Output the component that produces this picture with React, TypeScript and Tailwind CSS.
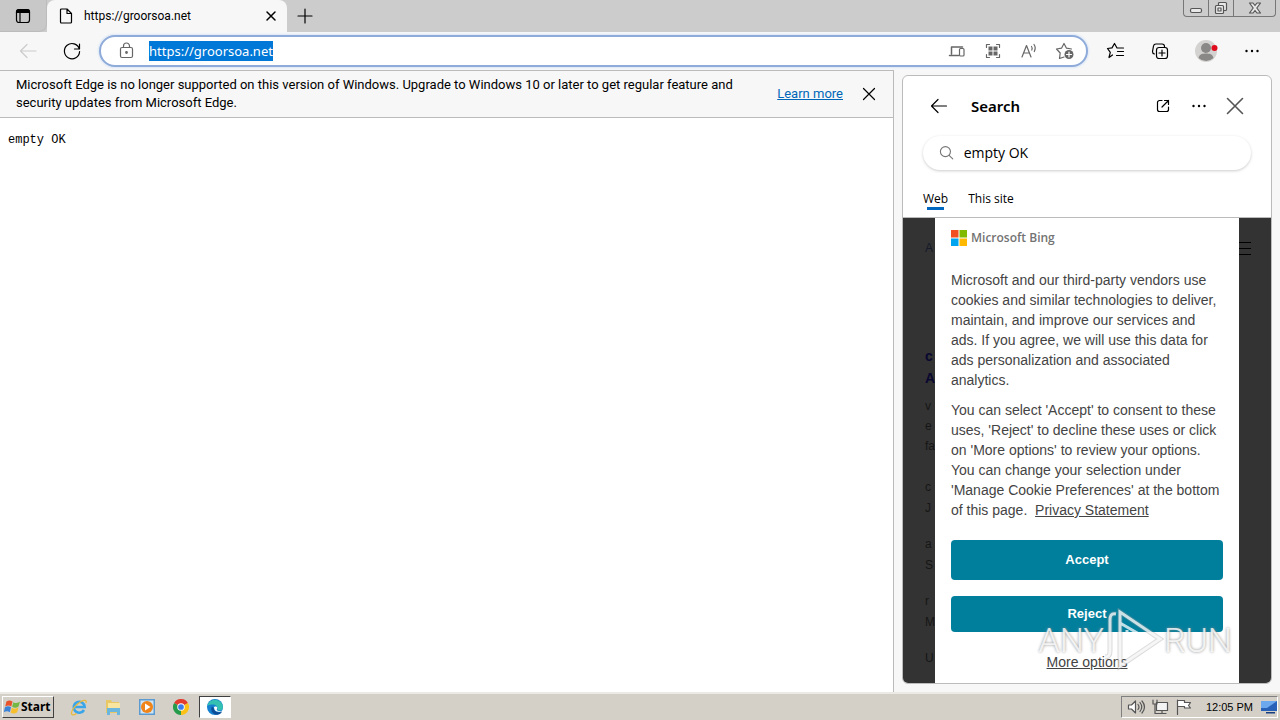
import { useState } from 'react'
import type { ReactNode } from 'react'

type SvgProps = {
    children: ReactNode
    className?: string
    box?: string
}

const results = [
    ['c', 'J'],
    ['a', 'S'],
    ['r', 'M'],
    ['U'],
]

function Icon({ children, className = 'size-5', box = '0 0 20 20' }: SvgProps) {
    return (
        <svg
            viewBox={box}
            className={className}
            fill="none"
            stroke="currentColor"
            strokeWidth="1.2"
            strokeLinecap="round"
            strokeLinejoin="round"
            aria-hidden="true"
        >
            {children}
        </svg>
    )
}

function Dots() {
    return (
        <Icon className="size-4" box="0 0 16 16">
            <g fill="currentColor" stroke="none">
                <circle cx="2.5" cy="8" r="1.2" />
                <circle cx="8" cy="8" r="1.2" />
                <circle cx="13.5" cy="8" r="1.2" />
            </g>
        </Icon>
    )
}

function TabStrip() {
    return (
        <header className="flex h-8 shrink-0 items-end bg-[#cccccc]">
            <button aria-label="Tab actions" className="flex h-8 w-[47px] items-center justify-center rounded-br-lg border-r border-b border-[#bcbcbc] bg-[#c8c8c8]">
                <Icon className="size-4" box="0 0 16 16">
                    <rect x="1.5" y="1.5" width="13" height="13" rx="2.5" />
                    <path d="M1.5 4.5V4a2.500 2.500 0 0 1 2.500-2.500h8A2.500 2.500 0 0 1 14.500 4v.5z" fill="currentColor" />
                    <path d="M5 5v9.500" />
                </Icon>
            </button>
            <div className="flex h-8 w-60 items-center rounded-t-lg bg-[#f7f7f7] pr-2 pl-[11px]">
                <Icon className="size-4" box="0 0 16 16">
                    <path d="M2.500 2a1 1 0 0 1 1-1H9l4.500 4.500V14a1 1 0 0 1-1 1h-9a1 1 0 0 1-1-1zM9 1v4.500h4.500" />
                </Icon>
                <span className="ml-[10px] flex-1 text-xs [font-family:Roboto,sans-serif]">https://groorsoa.net</span>
                <button aria-label="Close tab" className="flex size-4 items-center justify-center">
                    <Icon className="size-3" box="0 0 12 12">
                        <path d="M2 2l8 8M10 2l-8 8" strokeWidth="1.500" />
                    </Icon>
                </button>
            </div>
            <button aria-label="New tab" className="flex h-8 w-[35px] items-center justify-center">
                <Icon className="size-4" box="0 0 16 16">
                    <path d="M8 1v14M1 8h14" />
                </Icon>
            </button>
            <div className="mr-1 ml-auto flex h-[17px] self-start rounded-b border border-t-0 border-[#777777] text-[#555555]">
                <button aria-label="Minimize" className="flex w-[25px] items-center justify-center border-r border-[#777777]">
                    <Icon className="h-4 w-4" box="0 0 16 16">
                        <rect x="2.500" y="8.500" width="11" height="4" rx="1.500" fill="#e8e8e8" />
                    </Icon>
                </button>
                <button aria-label="Restore" className="flex w-[25px] items-center justify-center border-r border-[#777777]">
                    <Icon className="h-4 w-4" box="0 0 16 16">
                        <rect x="5.500" y="2.500" width="8" height="8" rx="1" fill="#e8e8e8" />
                        <rect x="2.500" y="5.500" width="8" height="8" rx="1" fill="#e8e8e8" />
                        <rect x="5" y="8" width="3" height="3" />
                    </Icon>
                </button>
                <button aria-label="Close window" className="flex w-[41px] items-center justify-center">
                    <Icon className="h-4 w-4" box="0 0 16 16">
                        <path d="M2.500 3h3.500l2 2.500L10 3h3.500l-3.700 5 3.700 5H10l-2-2.500L6 13H2.500l3.700-5z" fill="#e8e8e8" />
                    </Icon>
                </button>
            </div>
        </header>
    )
}

function Toolbar() {
    return (
        <nav className="flex h-[38px] shrink-0 items-center bg-[#f7f7f7] pr-5 pl-[18px]">
            <button aria-label="Back" disabled className="text-[#cccccc]">
                <Icon>
                    <path d="M18 10H2.500M9 3.500L2.500 10 9 16.500" />
                </Icon>
            </button>
            <button aria-label="Refresh" className="ml-6">
                <Icon>
                    <path d="M17.300 8A7.600 7.600 0 1 0 17.600 10.500M17.500 3v5h-5" />
                </Icon>
            </button>
            <div className="ml-[17px] flex h-8 flex-1 items-center rounded-full border-2 border-[#8fabd9] bg-white pr-[11px] pl-4 text-[#666666] shadow-[0_0_2px_1px_#dbe7f7]">
                <Icon>
                    <rect x="3.500" y="6.500" width="12" height="10" rx="1.500" />
                    <path d="M6.500 6.500V5a3 3 0 0 1 6 0v1.500" />
                    <circle cx="9.500" cy="11.500" r=".8" fill="currentColor" />
                </Icon>
                <div className="ml-3 flex-1 text-[13px] leading-5">
                    <button className="bg-[#0078d7] text-white">https://groorsoa.net</button>
                </div>
                <div className="flex items-center gap-4">
                    <button aria-label="Send to devices">
                        <Icon>
                            <path d="M4.500 13V6h11M2.500 14.500h9" strokeWidth="1.500" />
                            <rect x="12.500" y="7.500" width="4.500" height="7.500" rx="1" />
                        </Icon>
                    </button>
                    <button aria-label="QR code">
                        <Icon>
                            <path d="M3.500 6.500v-3h3M13.500 3.500h3v3M16.500 13.500v3h-3M6.500 16.500h-3v-3" />
                            <g fill="currentColor" stroke="none">
                                <rect x="5.500" y="5.500" width="4" height="4" />
                                <rect x="10.500" y="5.500" width="4" height="4" />
                                <rect x="5.500" y="10.500" width="4" height="4" />
                                <rect x="10.500" y="10.500" width="4" height="4" />
                            </g>
                        </Icon>
                    </button>
                    <button aria-label="Read aloud">
                        <Icon>
                            <path d="M3 16L7.500 4.500 12 16M4.600 12h5.800M12.500 5.500c.8 1 .8 2.500.3 3.500M15 3.500c1.500 2 1.500 4.500.3 7" />
                        </Icon>
                    </button>
                    <button aria-label="Add to favorites">
                        <Icon>
                            <path d="M9 16l-4.500 1.500.7-5.500L1.500 8l5-.8L9 2.500l2.500 4.700 5 .8" />
                            <circle cx="14" cy="13.500" r="4.500" fill="#666666" stroke="none" />
                            <path d="M14 11v5M11.500 13.500h5" stroke="#ffffff" />
                        </Icon>
                    </button>
                </div>
            </div>
            <button aria-label="Favorites" className="ml-[18px]">
                <Icon>
                    <path d="M6.500 14l-3.500 2.500 1.300-5.200L1.500 7.500l4.500-.6L8.500 2.500 11 7h6.500M11.500 10.500h6M10.500 14.500h7" />
                </Icon>
            </button>
            <button aria-label="Collections" className="ml-6">
                <Icon>
                    <path d="M4.500 13a2.500 2.500 0 0 1-2-2.500L3.500 5A2.500 2.500 0 0 1 6 3h6a2.500 2.500 0 0 1 2.500 2.500" />
                    <rect x="6.500" y="6.500" width="11" height="11" rx="2.500" fill="#f7f7f7" />
                    <path d="M12 9v6M9 12h6" />
                </Icon>
            </button>
            <button aria-label="Profile" className="ml-6">
                <Icon className="size-6" box="0 0 24 24">
                    <g stroke="none">
                        <circle cx="12" cy="12" r="11" fill="#d4d2d0" />
                        <circle cx="12" cy="9" r="5" fill="#8a8886" />
                        <path d="M4.500 19c1-4 4-4.500 7.500-4.500s6.500.5 7.500 4.500a11 11 0 0 1-15 0z" fill="#8a8886" />
                        <circle cx="20.500" cy="9" r="3" fill="#e00b1c" />
                    </g>
                </Icon>
            </button>
            <button aria-label="Settings and more" className="ml-[26px]"><Dots /></button>
        </nav>
    )
}

function Notice({ onClose }: { onClose: () => void }) {
    return (
        <div className="flex items-center border-b border-[#bbbbbb] bg-[#f7f7f7] py-[5px] pr-4 pl-4 text-[13px] leading-[18px] [font-family:Roboto,sans-serif]">
            <p className="flex-1">
                Microsoft Edge is no longer supported on this version of Windows. Upgrade to Windows 10 or later to get regular feature and security updates from Microsoft Edge.
            </p>
            <a href="#learn" className="ml-2 text-[#0067b8] underline">Learn more</a>
            <button aria-label="Dismiss" className="ml-[18px]" onClick={onClose}>
                <Icon className="size-4" box="0 0 16 16">
                    <path d="M2.500 2.500l11 11M13.500 2.500l-11 11" />
                </Icon>
            </button>
        </div>
    )
}

function ResultsEdge() {
    return (
        <div className="w-8 shrink-0 overflow-hidden pl-[22px] text-xs leading-[21px] text-[#161616]">
            <p className="pt-5 text-[#15192b]">A</p>
            <div className="mt-[86px] text-sm leading-[22px] font-bold text-[#0a0830]">
                <p>c</p>
                <p>A</p>
            </div>
            <div className="mt-[7px] mb-[21px] leading-5">
                <p>v</p>
                <p>e</p>
                <p>fa</p>
            </div>
            {results.map((lines) => (
                <div key={lines[0]} className="mb-[15px]">
                    {lines.map((line) => (
                        <p key={line}>{line}</p>
                    ))}
                </div>
            ))}
        </div>
    )
}

function Consent() {
    return (
        <section className="min-w-0 flex-1 bg-white px-4 pt-3 text-sm leading-5 text-[#444444]">
            <div className="flex h-4 items-center gap-1">
                <svg viewBox="0 0 16 16" className="size-4" aria-hidden="true">
                    <path fill="#f25022" d="M0 0h7.500v7.500H0z" />
                    <path fill="#7fba00" d="M8.500 0H16v7.500H8.500z" />
                    <path fill="#00a4ef" d="M0 8.500h7.500V16H0z" />
                    <path fill="#ffb900" d="M8.500 8.500H16V16H8.500z" />
                </svg>
                <span className="text-xs font-semibold text-[#737373] [font-family:'Open_Sans',sans-serif]">Microsoft Bing</span>
            </div>
            <p className="mt-6">
                Microsoft and our third-party vendors use cookies and similar technologies to deliver, maintain, and improve our services and ads. If you agree, we will use this data for ads personalization and associated analytics.
            </p>
            <p className="mt-[10px]">
                You can select 'Accept' to consent to these uses, 'Reject' to decline these uses or click on 'More options' to review your options. You can change your selection under 'Manage Cookie Preferences' at the bottom of this page.&nbsp; <a href="#privacy" className="underline">Privacy Statement</a>
            </p>
            <button className="mt-5 block h-10 w-full rounded bg-[#007f9d] text-[13px] font-bold text-white">Accept</button>
            <button className="mt-4 block h-9 w-full rounded bg-[#007f9d] text-[13px] font-bold text-white">Reject</button>
            <div className="mt-5 text-center">
                <a href="#options" className="underline">More options</a>
            </div>
        </section>
    )
}

function SearchPanel() {
    const [query, setQuery] = useState('empty OK')

    return (
        <aside className="mt-[5px] mr-2 mb-2 ml-2 flex w-[370px] shrink-0 flex-col overflow-hidden rounded-md border border-[#bbbbbb] bg-white">
            <div className="flex h-[60px] shrink-0 items-center pr-[26px] pl-[26px]">
                <button aria-label="Back to sidebar">
                    <Icon>
                        <path d="M17.500 10h-15M9 3.500L2.500 10 9 16.500" />
                    </Icon>
                </button>
                <h1 className="ml-[22px] flex-1 text-[15px] font-semibold">Search</h1>
                <button aria-label="Open in new tab">
                    <Icon className="size-4" box="0 0 16 16">
                        <path d="M7 2.500H4.500a2 2 0 0 0-2 2v7a2 2 0 0 0 2 2h7a2 2 0 0 0 2-2V9M9.500 2.500h4v4M13.500 2.500L7 9" />
                    </Icon>
                </button>
                <button aria-label="More" className="ml-5"><Dots /></button>
                <button aria-label="Close" className="ml-[18px] text-[#555555]">
                    <Icon>
                        <path d="M2.500 2.500l15 15M17.500 2.500l-15 15" strokeWidth="1.600" />
                    </Icon>
                </button>
            </div>
            <label className="mx-5 flex h-[34px] shrink-0 items-center rounded-full px-4 shadow-[0_1px_3px_#cccccc]">
                <Icon className="size-4 text-[#767676]" box="0 0 16 16">
                    <circle cx="7" cy="6.500" r="5.500" />
                    <path d="M11 10.500L15 14.500" />
                </Icon>
                <input
                    aria-label="Search the web"
                    className="ml-[10px] w-full text-sm outline-none [font-family:'Open_Sans',sans-serif]"
                    value={query}
                    onChange={(e) => setQuery(e.target.value)}
                />
            </label>
            <div className="flex h-12 shrink-0 items-end gap-5 border-b border-[#bbbbbb] px-5 pb-2 text-xs leading-4 [font-family:'Open_Sans',sans-serif]">
                <button className="relative pb-0.5">
                    Web
                    <span className="absolute inset-x-1 -bottom-px h-[3px] bg-[#0067c0]" />
                </button>
                <button className="pb-0.5">This site</button>
            </div>
            <div className="flex min-h-0 flex-1 overflow-hidden bg-[#333333] [font-family:'Liberation_Sans',Arial,sans-serif]">
                <ResultsEdge />
                <Consent />
                <div className="w-8 shrink-0 pt-[22px]">
                    <Icon className="h-4 w-3 text-black" box="0 0 12 16">
                        <path d="M0 2.500h11.500M0 8.500h11.500M0 14.500h11.500" />
                    </Icon>
                </div>
            </div>
        </aside>
    )
}

function Watermark() {
    return (
        <div className="pointer-events-none absolute right-12 bottom-12 flex items-center text-[34px] leading-none font-light text-white/80 [font-family:Roboto,sans-serif] [text-shadow:0_0_3px_#888888]">
            <span>ANY</span>
            <svg viewBox="0 0 60 64" className="h-16 w-[60px]" fill="none" stroke="#ffffff" strokeOpacity=".75" strokeWidth="3" aria-hidden="true">
                <g stroke="#999999" strokeOpacity=".35" strokeWidth="5">
                    <path d="M12 6c-5-1-6 2-6 6v31c0 4-1 6-5 6M16 4v54l40-27z" />
                </g>
                <path d="M12 6c-5-1-6 2-6 6v31c0 4-1 6-5 6M16 4v54l40-27zM16 15l26 15M23 22v19" />
            </svg>
            <span>RUN</span>
        </div>
    )
}

function Taskbar() {
    return (
        <footer className="flex h-7 shrink-0 items-center border-t-2 border-[#eceae5] bg-[#d4d0c8] pr-[2px] pl-[2px]">
            <button className="flex h-[22px] w-[52px] items-center border border-t-white border-r-[#404040] border-b-[#404040] border-l-white pl-px text-xs font-bold">
                <svg viewBox="1 2 14 12" className="h-4 w-[17px] shrink-0" aria-hidden="true">
                    <path fill="#e8532b" d="M3 3.500c2-1.500 3.500-1 5 0L7 7.500c-1.500-1-3-1-5 0z" />
                    <path fill="#74b843" d="M8.700 4c2 1 3.500 1 5.500-.5L13 7.500c-2 1.400-3.500 1.300-5.300.3z" />
                    <path fill="#3c83d8" d="M1.800 8.300c2-1.300 3.500-1 5 0l-1 4c-1.500-1-3-1-5 0z" />
                    <path fill="#f7bf2b" d="M7.500 8.700c2 1 3.500 1 5.500-.4l-1.200 4c-2 1.400-3.500 1.300-5.300.4z" />
                </svg>
                <span>Start</span>
            </button>
            <div className="ml-2 flex items-center">
                <button aria-label="Internet Explorer" className="flex w-[34px] justify-center">
                    <svg viewBox="0 0 18 18" className="size-[18px]" fill="none" aria-hidden="true">
                        <path d="M14 12a5.500 5.500 0 1 1 .7-3H5" stroke="#3aa5e8" strokeWidth="2.600" />
                        <path d="M16 5c1-3-1.500-3.500-5-1.500S2 11 1.500 14.500s3 2.500 5 1" stroke="#e9b93c" strokeWidth="1.300" />
                    </svg>
                </button>
                <button aria-label="Explorer" className="flex w-[34px] justify-center">
                    <svg viewBox="0 0 18 18" className="size-[18px]" aria-hidden="true">
                        <path fill="#e8c765" d="M2 2h5l1 2h7v11H2z" />
                        <path fill="#f8e6a0" d="M4 5h12v6H4z" />
                        <path fill="#6bb6df" d="M3 10h13v7h-3v-3H6v3H3z" />
                    </svg>
                </button>
                <button aria-label="Media Player" className="flex w-[34px] justify-center">
                    <svg viewBox="0 0 18 18" className="size-[18px]" aria-hidden="true">
                        <path fill="#5c9bd0" d="M1 1h16v16H1z" />
                        <path fill="#cfe4f5" d="M2.500 2.500h13v13h-13z" />
                        <circle cx="9" cy="9" r="6" fill="#f08418" />
                        <path fill="#ffffff" d="M7 5.500v7L12.500 9z" />
                    </svg>
                </button>
                <button aria-label="Chrome" className="flex w-[34px] justify-center">
                    <svg viewBox="0 0 18 18" className="size-4" aria-hidden="true">
                        <path fill="#e33b2e" d="M9 9L1.200 4.500a9 9 0 0 1 15.600 0z" />
                        <path fill="#fbc116" d="M9 9l7.800-4.500A9 9 0 0 1 9 18z" />
                        <path fill="#269b4b" d="M9 9v9A9 9 0 0 1 1.200 4.500z" />
                        <circle cx="9" cy="9" r="4.200" fill="#ffffff" />
                        <circle cx="9" cy="9" r="3.200" fill="#3b7ded" />
                    </svg>
                </button>
                <button aria-label="Edge" className="ml-px flex h-[22px] w-8 items-center justify-center border border-t-[#404040] border-r-white border-b-white border-l-[#404040] bg-white">
                    <svg viewBox="0 0 18 18" className="size-[18px]" aria-hidden="true">
                        <circle cx="9" cy="9" r="8" fill="#1480cf" />
                        <path fill="#35c1b2" d="M1.200 8A8 8 0 0 1 17 9c0 3-2.500 4-5.500 3.200C12.500 9 10 6.500 7 6.500 4 6.500 2 7 1.200 8z" />
                        <path fill="#0d4d97" d="M6 8.500c-2 3 0 8 5 8.200 2 0 4-1.200 5-3-4 1.500-8 0-8-3z" />
                        <path fill="#ffffff" d="M8 9.500C8 8 11.500 8 11.300 10c0 1-1 1.500-.3 2.200 1.500 1.300 4 1 5.500 0-3 3-8.500 1.500-8.500-2.700z" />
                    </svg>
                </button>
            </div>
            <div className="ml-auto flex h-[22px] items-center border border-t-[#808080] border-r-white border-b-white border-l-[#808080] pl-1 text-[#555555]">
                <Icon className="size-5">
                    <path d="M2.500 8h3l4-4v12l-4-4h-3z" fill="#ffffff" />
                    <path d="M12 7.500q2 2.500 0 5M14 5.500q3.500 4.500 0 9M16 4q5 6 0 12" />
                </Icon>
                <Icon className="ml-1 size-5">
                    <rect x="6.500" y="5.500" width="11" height="8" fill="#f4f4f4" />
                    <path d="M8 16.500h8M12 13.500v3M3 3v4h4V3M5 7v9.500h4" />
                </Icon>
                <Icon className="ml-1 size-5">
                    <path d="M3.500 3v14.500M3.500 3.500h7v2h6l-2 3 2 2.500h-6v-1.500h-7z" fill="#ffffff" />
                </Icon>
                <time className="ml-3 text-[11px] text-black [font-family:'Liberation_Sans',sans-serif]">12:05 PM</time>
                <svg viewBox="0 0 16 16" className="ml-2 size-4" aria-hidden="true">
                    <path fill="#2862b8" d="M0 2h16v10H0z" />
                    <path fill="#6ca8ed" d="M0 2h16L6 9H0z" />
                    <path fill="#173f80" d="M5 13h9v1.500H5z" />
                </svg>
            </div>
        </footer>
    )
}

export default function App() {
    const [showNotice, setShowNotice] = useState(true)

    return (
        <div className="relative flex h-screen flex-col overflow-hidden bg-[#f7f7f7] text-black [font-family:'Noto_Sans',sans-serif]">
            <TabStrip />
            <Toolbar />
            <div className="flex min-h-0 flex-1">
                <main className="min-w-0 flex-1 border-t border-r border-[#bbbbbb] bg-white">
                    {showNotice && <Notice onClose={() => setShowNotice(false)} />}
                    <pre className="px-2 py-3 text-xs leading-5 [font-family:'Liberation_Mono',monospace]">empty OK</pre>
                </main>
                <SearchPanel />
            </div>
            <Taskbar />
            <Watermark />
        </div>
    )
}
